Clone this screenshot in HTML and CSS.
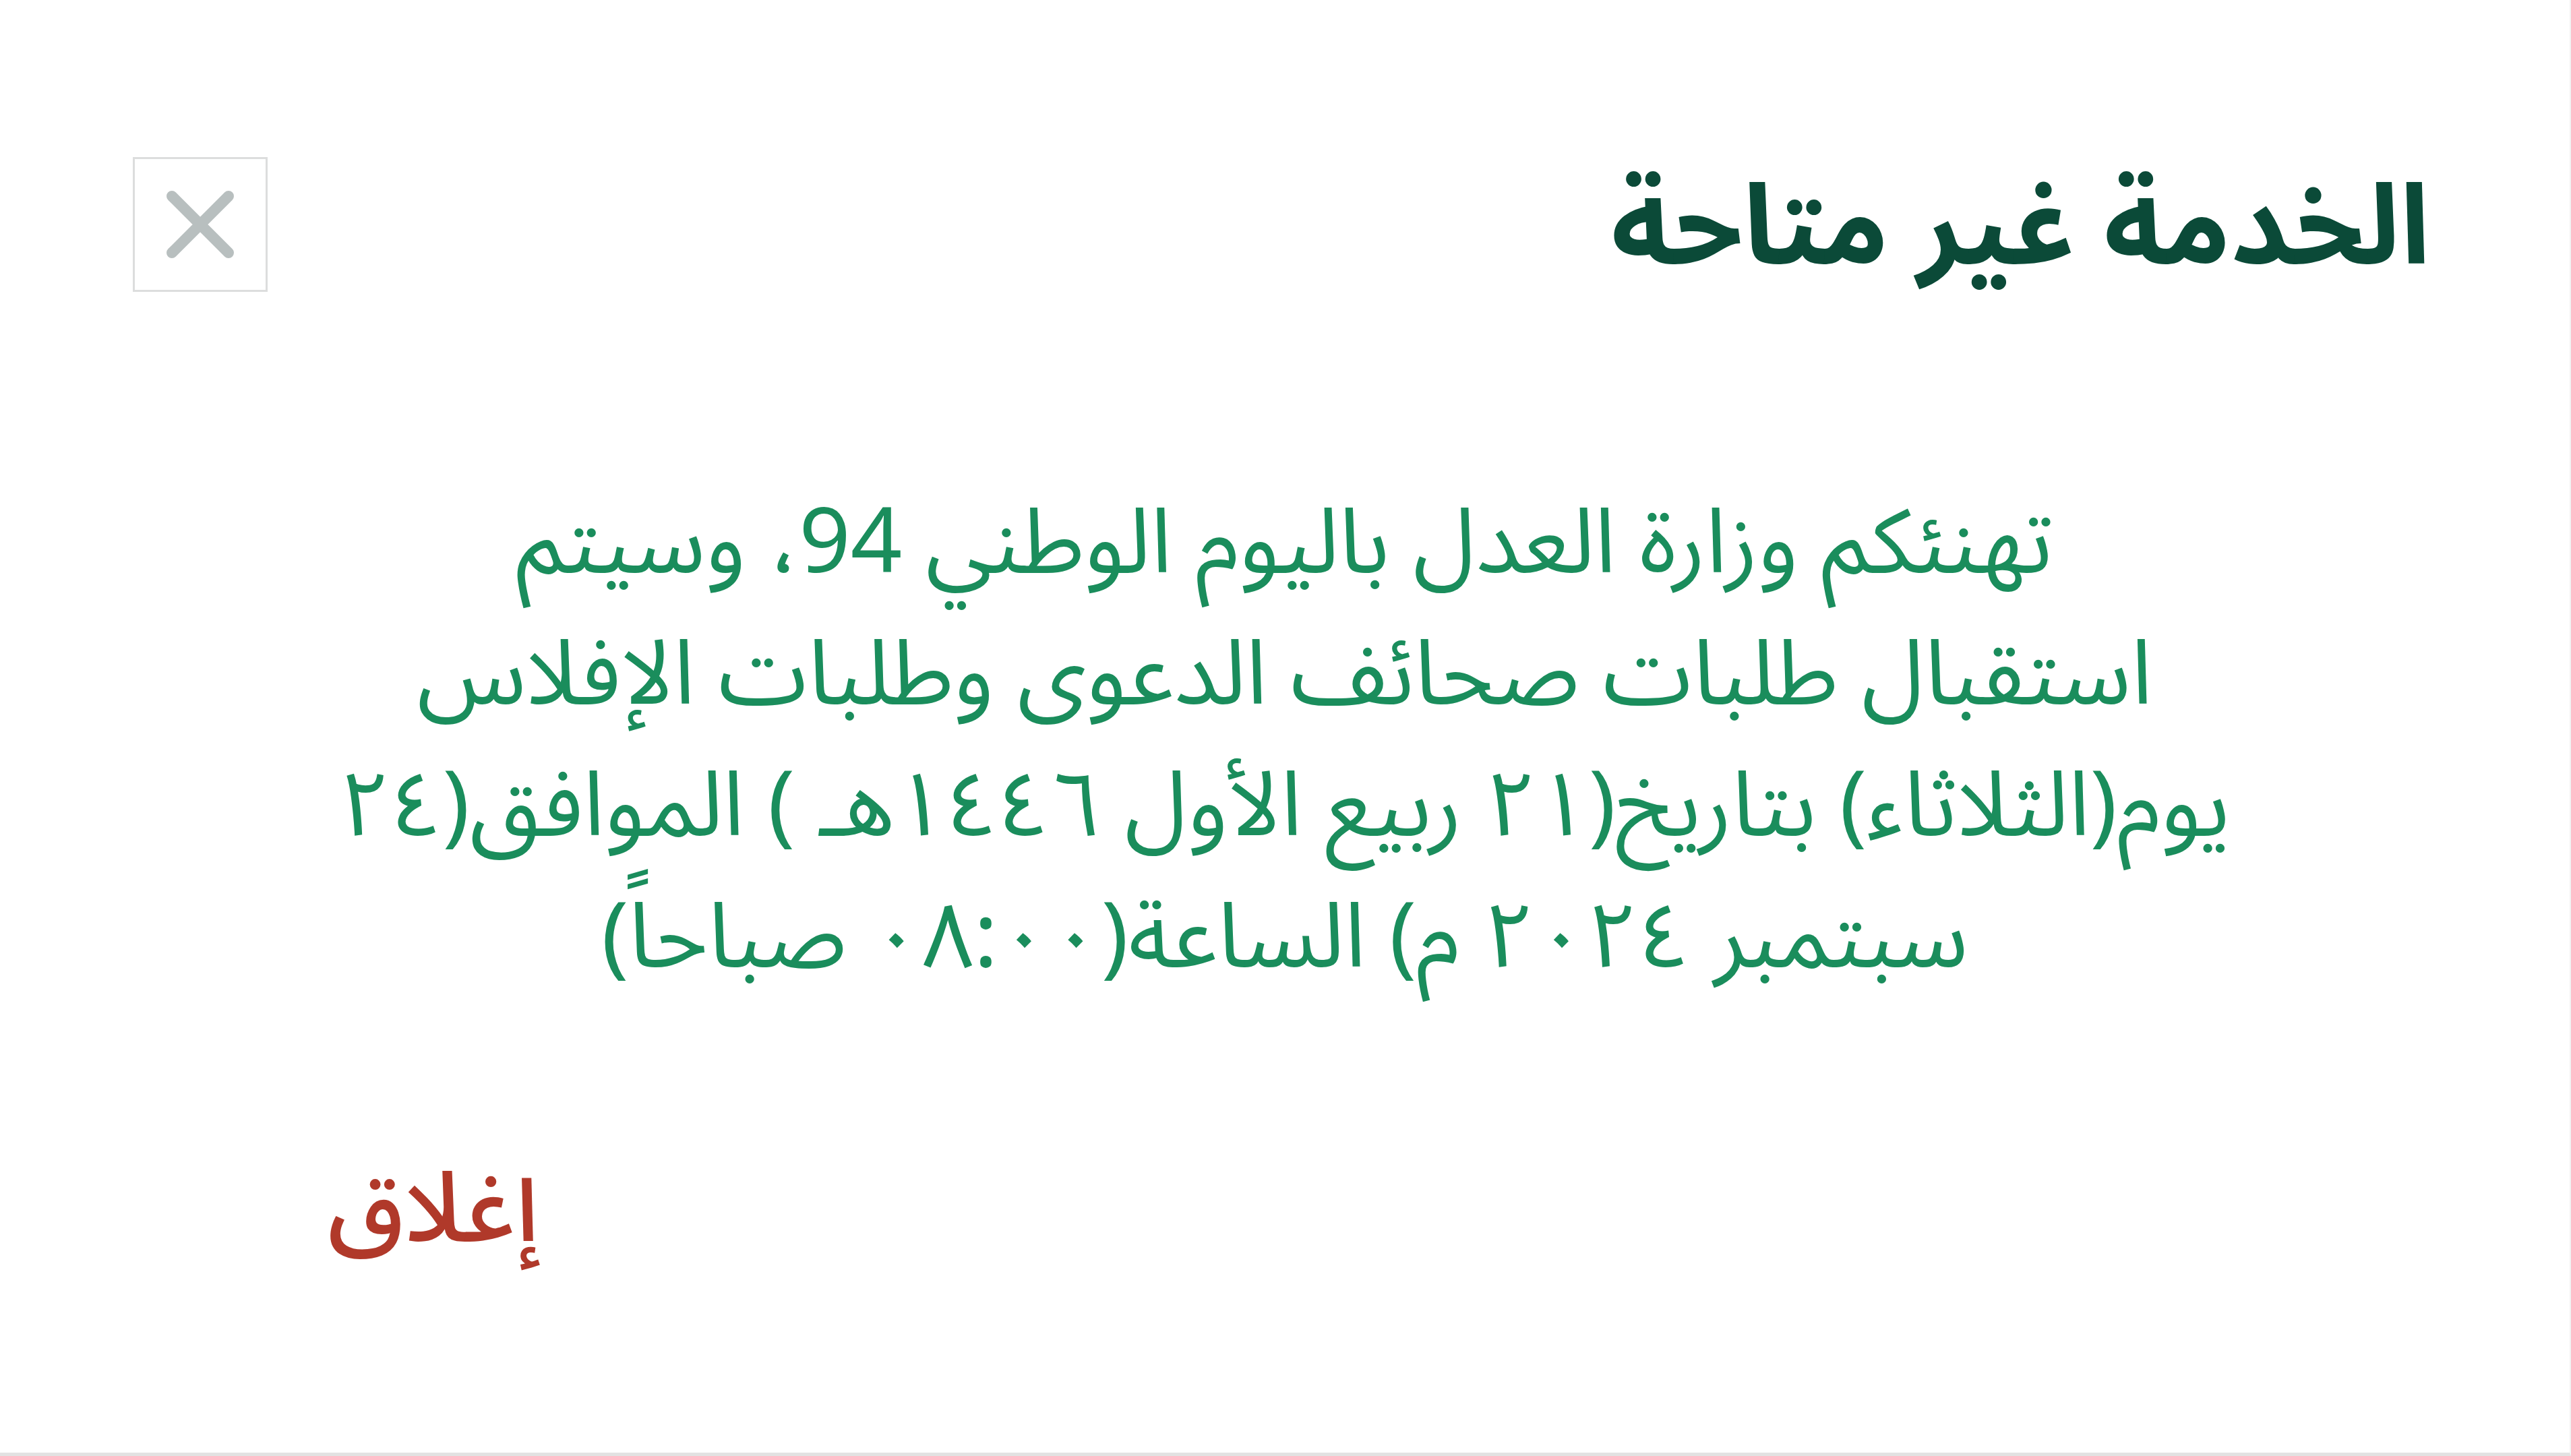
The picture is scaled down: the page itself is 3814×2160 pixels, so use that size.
FILE: index.html
```
<!DOCTYPE html>
<html lang="ar" dir="rtl">
<head>
<meta charset="utf-8">
<title>الخدمة غير متاحة</title>
<link rel="stylesheet" href="styles.css">
</head>
<body>
<div class="page">
  <header class="header">
    <h1 class="title">الخدمة غير متاحة</h1>
    <button class="close-box" aria-label="إغلاق">
      <svg class="close-icon" viewBox="0 0 100 100" width="100" height="100">
        <path d="M8 8 L92 92 M92 8 L8 92" stroke="#b8bfbf" stroke-width="16" stroke-linecap="round" fill="none"/>
      </svg>
    </button>
  </header>
  <main class="message">
    <p class="message-text"><span class="line">تهنئكم وزارة العدل باليوم الوطني 94، وسيتم</span><span class="line">استقبال طلبات صحائف الدعوى وطلبات الإفلاس</span><span class="line">يوم(الثلاثاء) بتاريخ(٢١ ربيع الأول ١٤٤٦هـ ) الموافق(٢٤</span><span class="line">سبتمبر ٢٠٢٤ م) الساعة(٠٨:٠٠ صباحاً)</span></p>
  </main>
  <footer class="footer">
    <span class="close-link">إغلاق</span>
  </footer>
</div>
</body>
</html>
```
FILE: styles.css
```
html, body {
  margin: 0;
  padding: 0;
  background: #ffffff;
}
body {
  font-family: "Noto Sans Arabic", "Noto Kufi Arabic", "DejaVu Sans", sans-serif;
}
.page {
  height: 2160px;
  box-sizing: border-box;
  border-bottom: 5px solid #e2e2e2;
  border-right: 2px solid #f2f2f2;
  display: flex;
  flex-direction: column;
}
.header {
  display: flex;
  justify-content: space-between;
  align-items: flex-start;
  padding: 233px 207px 0 197px;
}
.title {
  margin: 0;
  font-size: 165px;
  line-height: 200px;
  font-weight: 700;
  color: #0b4a38;
  padding-top: 6px;
}
.close-box {
  width: 200px;
  height: 200px;
  box-sizing: border-box;
  border: 3px solid #dcdddd;
  background: #ffffff;
  padding: 0;
  display: flex;
  align-items: center;
  justify-content: center;
}
.close-icon {
  display: block;
}
.message {
  padding-top: 270px;
}
.message-text {
  margin: 0;
  display: flex;
  flex-direction: column;
  align-items: center;
  font-size: 134px;
  color: #1a8d5c;
}
.line {
  display: block;
  height: 195px;
  line-height: 195px;
  white-space: nowrap;
}
.footer {
  display: flex;
  justify-content: flex-end;
  padding: 216px 0 0 486px;
}
.close-link {
  font-size: 144px;
  line-height: 180px;
  font-weight: 500;
  color: #b0392a;
}
```
